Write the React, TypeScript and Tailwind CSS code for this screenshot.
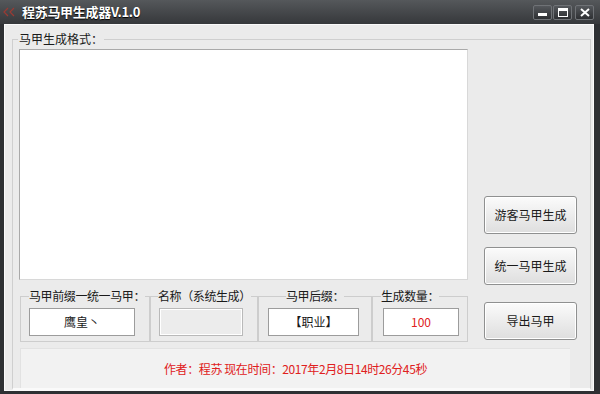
import React from "react";

const font = { fontFamily: '"Noto Sans CJK SC", "Noto Sans", sans-serif' };

function TitleButton({ children }: { children: React.ReactNode }) {
  return (
    <div className="flex h-[15px] w-[19px] items-center justify-center rounded-[2px] border border-[#6f7276] bg-linear-to-b from-[#55585c] to-[#2e3033]">
      {children}
    </div>
  );
}

function WinButton({ label }: { label: string }) {
  return (
    <button className="flex h-[38px] w-[93px] items-center justify-center rounded-[3px] border border-[#8f9090] bg-linear-to-b from-[#fbfbfb] to-[#dedede] text-[12px] text-[#1a1a1a] shadow-[inset_0_0_0_1px_#ffffff]">
      {label}
    </button>
  );
}

function Group({
  title,
  width,
  lg,
  pad,
  children,
}: {
  title: string;
  width: string;
  lg: string;
  pad: string;
  children: React.ReactNode;
}) {
  return (
    <fieldset className={`${width} ${pad} min-w-0 border border-[#cdcdcd] pt-[6px] pb-[5px]`}>
      <legend className={`${lg} whitespace-nowrap px-0 text-[12px] leading-[12px] tracking-[-0.4px] text-[#1a1a1a]`}>
        {title}
      </legend>
      {children}
    </fieldset>
  );
}

export default function App() {
  return (
    <div className="flex h-[394px] w-[600px] flex-col bg-[#2e3033]" style={font}>
      {/* title bar */}
      <div className="flex h-[24px] items-center bg-linear-to-b from-[#55585b] to-[#36383b] pl-[3px] pr-[6px]">
        <svg width="14" height="10" viewBox="0 0 14 10" className="mr-[5px]">
          <path d="M5 1 L1 5 L5 9" stroke="#9b3a33" strokeWidth="1.2" fill="none" />
          <path d="M11 1 L7 5 L11 9" stroke="#9b3a33" strokeWidth="1.2" fill="none" />
        </svg>
        <span className="text-[13px] font-bold tracking-[-0.3px] text-white [text-shadow:0_1px_1px_#000]">
          程苏马甲生成器V.1.0
        </span>
        <div className="ml-auto flex gap-[1px]">
          <TitleButton>
            <div className="mt-[5px] h-[3px] w-[9px] bg-white" />
          </TitleButton>
          <TitleButton>
            <div className="h-[9px] w-[10px] border-[1.5px] border-t-[3px] border-white" />
          </TitleButton>
          <div className="ml-[2px]">
            <TitleButton>
              <svg width="10" height="9" viewBox="0 0 10 9">
                <path d="M1 1 L9 8 M9 1 L1 8" stroke="#fff" strokeWidth="2" />
              </svg>
            </TitleButton>
          </div>
        </div>
      </div>

      {/* client area */}
      <div className="ml-[4px] mr-[6px] mb-[3px] flex flex-1 flex-col border border-[#fafafa] bg-[#ebebeb] pt-[8px] pl-[7px] pr-[2px]">
        <fieldset className="flex min-w-0 flex-1 flex-col border border-b-[2px] border-[#cfcfcf] border-b-[#fafafa] pl-[6px] pt-[4px]">
          <legend className="ml-[-1px] px-[1px] text-[12px] leading-[12px] text-[#1a1a1a]">
            马甲生成格式：
          </legend>

          <div className="flex">
            <div className="flex w-[449px] flex-col">
              <textarea className="h-[231px] w-[449px] resize-none border border-[#a9a9a9] border-r-[#d8d8d8] border-b-[#d8d8d8] bg-white outline-none" />

              <div className="ml-[1px] mt-[10px] flex">
                <Group title="马甲前缀一统一马甲：" width="w-[130px]" lg="ml-[0px]" pad="pl-[8px]">
                  <div className="flex h-[28px] w-[106px] items-center justify-center border border-[#9c9c9c] bg-white text-[12px] text-[#1a1a1a]">
                    鹰皇丶
                  </div>
                </Group>
                <Group title="名称（系统生成）" width="w-[108px]" lg="ml-[-1px]" pad="pl-[8px]">
                  <div className="h-[28px] w-[84px] border border-[#b9b9b9] bg-[#ececec] shadow-[inset_0_0_0_1px_#ffffff]" />
                </Group>
                <Group title="马甲后缀：" width="w-[114px]" lg="ml-[18px]" pad="pl-[9px]">
                  <div className="flex h-[28px] w-[91px] items-center justify-center border border-[#9c9c9c] bg-white text-[12px] text-[#1a1a1a]">
                    【职业】
                  </div>
                </Group>
                <Group title="生成数量：" width="w-[96px]" lg="ml-[-2px]" pad="pl-[10px]">
                  <div className="flex h-[28px] w-[76px] items-center justify-center border border-[#9c9c9c] bg-white text-[12px] text-[#e02020]">
                    100
                  </div>
                </Group>
              </div>
            </div>

            <div className="ml-[16px] flex flex-col pt-[147px]">
              <WinButton label="游客马甲生成" />
              <div className="mt-[13px]">
                <WinButton label="统一马甲生成" />
              </div>
              <div className="mt-[17px]">
                <WinButton label="导出马甲" />
              </div>
            </div>
          </div>

          <div className="ml-[1px] mt-[6px] flex w-[550px] flex-1 justify-center border-t border-l border-[#e2e2e2] bg-[#f2f2f2] pt-[13px] text-[12px] leading-[14px] tracking-[-0.4px] text-[#e02020]">
            作者：程苏 现在时间：2017年2月8日14时26分45秒
          </div>
        </fieldset>
      </div>
    </div>
  );
}
